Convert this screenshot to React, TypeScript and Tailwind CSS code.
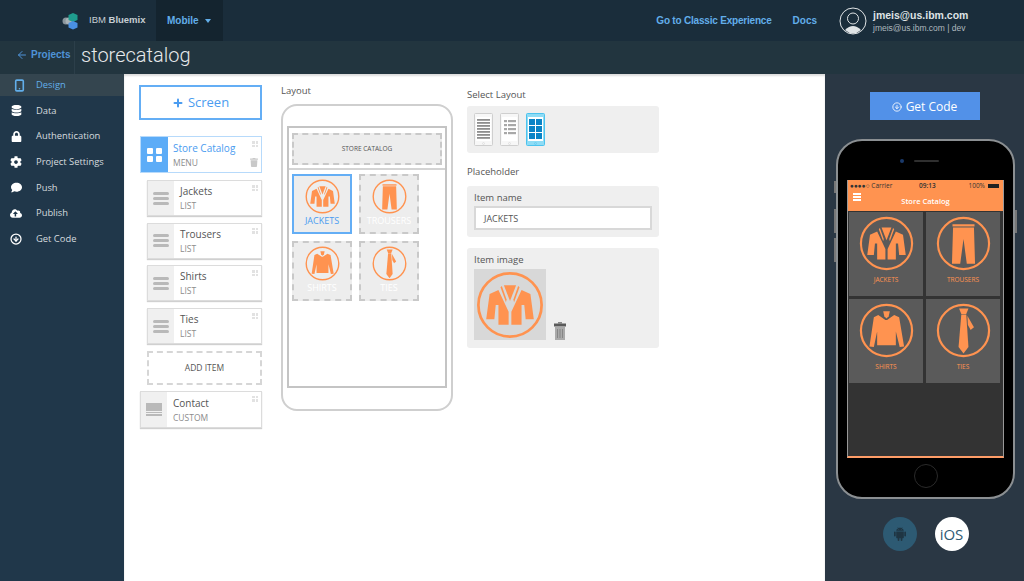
import { ArrowLeft, CircleArrowDown, Smartphone, Plus } from "lucide-react";
import { AiFillAndroid } from "react-icons/ai";
import { FaCloudUploadAlt, FaCog, FaComment, FaDatabase, FaLock, FaTrash } from "react-icons/fa";

type Garment = "jacket" | "trousers" | "shirt" | "tie";

function GarmentIcon({ kind, className }: { kind: Garment; className: string }) {
	return (
		<svg viewBox="0 0 100 100" className={className} fill="#ff9350">
			<circle cx="50" cy="50" r="46.5" fill="none" stroke="#ff9350" strokeWidth="4" />
			{kind === "jacket" && (
				<>
					<path d="M33 28 L20 34 L15 71 L27 71 L29 50 L33 50 L33 79 L48 79 L48 60 Z" />
					<path d="M67 28 L80 34 L85 71 L73 71 L71 50 L67 50 L67 79 L52 79 L52 60 Z" />
					<path d="M41 21 L59 21 L50 44 Z" />
					<path d="M36 24 L38 22 L45 42 L44 46 Z" />
					<path d="M64 24 L62 22 L55 42 L56 46 Z" />
				</>
			)}
			{kind === "trousers" && (
				<>
					<path d="M30 15 L70 15 L70 19 L30 19 Z" />
					<path d="M31 21 L69 21 L71 87 L56 87 L50 42 L44 87 L29 87 Z" />
				</>
			)}
			{kind === "shirt" && (
				<>
					<path d="M35 22 L27 26 L19 79 L27 80 L33 52 L33 77 L67 77 L67 52 L74 80 L82 79 L73 26 L64 22 L51 31 L48 31 Z" />
					<path d="M44 15 L56 15 L54 24 L50 28 L46 24 Z" />
				</>
			)}
			{kind === "tie" && (
				<>
					<path d="M42 10 L59 10 L55 20 L46 20 Z" />
					<path d="M46 21 L55 21 L59 80 L50 92 L41 80 Z" />
					<path d="M57 23 L69 44 L63 49 L58 40 Z" />
				</>
			)}
		</svg>
	);
}

function Grip() {
	return (
		<div className="absolute right-[3px] top-[4px] grid grid-cols-2 gap-[1px]">
			<span className="h-[2.5px] w-[2.5px] bg-[#e2e2e2]" />
			<span className="h-[2.5px] w-[2.5px] bg-[#e2e2e2]" />
			<span className="h-[2.5px] w-[2.5px] bg-[#e2e2e2]" />
			<span className="h-[2.5px] w-[2.5px] bg-[#e2e2e2]" />
		</div>
	);
}

function Lines() {
	return (
		<div className="flex w-[16px] flex-col gap-[2px]">
			<span className="h-[3px] rounded-sm bg-[#b9b9b9]" />
			<span className="h-[3px] rounded-sm bg-[#b9b9b9]" />
			<span className="h-[3px] rounded-sm bg-[#b9b9b9]" />
		</div>
	);
}

function ListCard({ name }: { name: string }) {
	return (
		<div className="relative ml-[8px] flex h-[36px] border border-[#dcdcdc] bg-white shadow-[0_1px_1px_#d0d0d0]">
			<div className="flex w-[26px] items-center justify-center bg-[#f0f0f0]">
				<Lines />
			</div>
			<div className="pl-[6px] pt-[3px]">
				<div className="text-[10px] leading-[15px] text-[#555555]">{name}</div>
				<div className="text-[8.5px] leading-[13px] text-[#8c8c8c]">LIST</div>
			</div>
			<Grip />
		</div>
	);
}

function DashTile({ kind, label, active }: { kind: Garment; label: string; active?: boolean }) {
	return (
		<div
			className={
				active
					? "flex h-[60px] w-[60px] flex-col items-center border-2 border-[#64aef5] bg-[#ededed] pt-[3px]"
					: "flex h-[60px] w-[60px] flex-col items-center border-2 border-dashed border-[#c9c9c9] bg-[#ededed] pt-[3px]"
			}
		>
			<GarmentIcon kind={kind} className="h-[35px] w-[35px]" />
			<span className={active ? "mt-[1px] text-[9px] leading-[12px] text-[#4b9cf0]" : "mt-[1px] text-[9px] leading-[12px] text-white"}>
				{label}
			</span>
		</div>
	);
}

function PhoneTile({ kind, label }: { kind: Garment; label: string }) {
	return (
		<div className="flex h-[84px] w-[74px] flex-col items-center bg-[#5a5a5a] pt-[4px]">
			<GarmentIcon kind={kind} className="h-[55px] w-[55px]" />
			<span className="mt-[4px] text-[6.5px] leading-[9px] text-[#ff9350]">{label}</span>
		</div>
	);
}

function LayoutThumb({ variant }: { variant: "list" | "rows" | "grid" }) {
	const edge = variant === "grid" ? "#4cc3ee" : "#cfcfcf";
	return (
		<svg viewBox="0 0 19 33" className="h-[33px] w-[19px]">
			<rect x="0.5" y="0.5" width="18" height="32" rx="1" fill={variant === "grid" ? "#8fdcf5" : "#f7f7f7"} stroke={edge} />
			<rect x="2" y="4" width="15" height="24" fill="#ffffff" />
			<circle cx="9.5" cy="30.5" r="1" fill="none" stroke={edge} strokeWidth="0.5" />
			{variant === "list" &&
				[6, 9, 12, 15, 18, 21, 24].map((y) => <rect key={y} x="3" y={y} width="13" height="1.8" fill="#8e8e8e" />)}
			{variant === "rows" &&
				[7, 11, 15, 19].map((y) => (
					<g key={y}>
						<rect x="4" y={y} width="3" height="2.2" fill="#a8a8a8" />
						<rect x="8" y={y} width="8" height="2.2" fill="#a8a8a8" />
					</g>
				))}
			{variant === "grid" &&
				[6, 13, 20].map((y) =>
					[3, 10].map((x) => <rect key={`${x}-${y}`} x={x} y={y} width="6" height="6" fill="#0a84c6" />),
				)}
		</svg>
	);
}

const navItems = [
	{ label: "Data", icon: <FaDatabase className="h-[11px] w-[11px]" /> },
	{ label: "Authentication", icon: <FaLock className="h-[11px] w-[11px]" /> },
	{ label: "Project Settings", icon: <FaCog className="h-[12px] w-[12px]" /> },
	{ label: "Push", icon: <FaComment className="h-[11px] w-[11px]" /> },
	{ label: "Publish", icon: <FaCloudUploadAlt className="h-[13px] w-[13px]" /> },
	{ label: "Get Code", icon: <CircleArrowDown className="h-[12px] w-[12px]" strokeWidth={2.5} /> },
];

export default function App() {
	return (
		<div className="flex h-[581px] w-[1024px] flex-col overflow-hidden bg-white font-['Open_Sans',sans-serif]">
			<header className="flex h-[41px] shrink-0 items-center bg-[#1a2d3b] pl-[62px] font-['Liberation_Sans',sans-serif]">
				<svg viewBox="0 0 17 18" className="h-[18px] w-[17px]">
					<circle cx="4" cy="9" r="3.5" fill="#8a959c" />
					<circle cx="7" cy="9" r="3.5" fill="#a9b2b7" />
					<path d="M11 1 L15.5 3 L15.5 8 L11 10 L6.5 8 L6.5 3 Z" fill="#1f9c8e" />
					<path d="M11 9 L15.5 11 L15.5 15.5 L11 17.5 L6.5 15.5 L6.5 11 Z" fill="#4a90e2" />
				</svg>
				<div className="ml-[10px] w-[57px] whitespace-nowrap text-[9.5px] text-[#c6ced3]">
					IBM <span className="font-bold">Bluemix</span>
				</div>
				<div className="ml-[10px] flex h-full w-[67px] items-center bg-[#14242f] pl-[11px] text-[10px] font-bold text-[#62aeea]">
					Mobile
					<span className="ml-[6px] h-0 w-0 border-x-[3px] border-t-[4px] border-x-transparent border-t-[#62aeea]" />
				</div>
				<div className="ml-auto text-[10px] font-bold tracking-[-0.2px] text-[#62aeea]">Go to Classic Experience</div>
				<div className="ml-[21px] text-[10px] font-bold text-[#62aeea]">Docs</div>
				<svg viewBox="0 0 28 28" className="ml-[22px] h-[28px] w-[28px]">
					<circle cx="14" cy="14" r="13" fill="none" stroke="#dfe3e5" strokeWidth="1" />
					<circle cx="14" cy="11.5" r="5.5" fill="none" stroke="#dfe3e5" strokeWidth="1" />
					<path d="M6 23 Q14 15 22 23 Q14 30 6 23 Z" fill="#dfe3e5" />
				</svg>
				<div className="ml-[6px] w-[151px] shrink-0 whitespace-nowrap">
					<div className="text-[10.5px] font-bold leading-[14px] text-[#dfe3e5]">jmeis@us.ibm.com</div>
					<div className="mt-[1px] text-[8.5px] leading-[11px] text-[#aeb8be]">jmeis@us.ibm.com | dev</div>
				</div>
			</header>

			<div className="flex h-[33px] shrink-0 items-center bg-[#22353f]">
				<div className="flex h-full w-[75px] items-center border-r border-[#2c3f4a] pb-[6px] pl-[16px] font-['Liberation_Sans',sans-serif] text-[10px] font-bold text-[#4f93d8]">
					<ArrowLeft className="mr-[3px] h-[12px] w-[12px]" />
					Projects
				</div>
				<div className="ml-[6px] pb-[6px] font-['Roboto',sans-serif] text-[20px] font-light text-[#e6e9eb]">storecatalog</div>
			</div>

			<div className="flex min-h-0 flex-1">
				<nav className="w-[124px] shrink-0 bg-[#20374a] text-[9.4px] text-[#d5dbdf]">
					<div className="flex h-[22px] items-center bg-[#34454f] pl-[13px] text-[#62aeea]">
						<Smartphone className="h-[15px] w-[13px]" strokeWidth={3} />
						<span className="ml-[10px]">Design</span>
					</div>
					<div className="flex flex-col pt-[2px]">
						{navItems.map((item) => (
							<div key={item.label} className="flex h-[25.6px] items-center text-white">
								<span className="flex w-[36px] justify-center">
									<span className="-ml-[4px] flex w-[12px] justify-center">{item.icon}</span>
								</span>
								<span className="text-[#d5dbdf]">{item.label}</span>
							</div>
						))}
					</div>
				</nav>

				<main className="flex flex-1 items-start pl-[15px] pt-[11px] shadow-[inset_0_2px_2px_#dddddd]">
					<div className="flex w-[123px] shrink-0 flex-col">
						<div className="flex h-[35px] items-center justify-center border-2 border-[#64aef5] text-[13px] text-[#4b9cf0]">
							<Plus className="mr-[4px] h-[12px] w-[12px]" strokeWidth={4} />
							Screen
						</div>
						<div className="relative ml-[1px] mt-[16px] flex h-[37px] border border-[#b7dafb] bg-white">
							<div className="grid w-[27px] grid-cols-2 content-center justify-center gap-[2px] bg-[#5cacf7] px-[6px]">
								<span className="h-[6px] w-[6px] rounded-[1px] bg-white" />
								<span className="h-[6px] w-[6px] rounded-[1px] bg-white" />
								<span className="h-[6px] w-[6px] rounded-[1px] bg-white" />
								<span className="h-[6px] w-[6px] rounded-[1px] bg-white" />
							</div>
							<div className="pl-[5px] pt-[4px]">
								<div className="text-[10px] leading-[15px] text-[#4b9cf0]">Store Catalog</div>
								<div className="text-[8.5px] leading-[13px] text-[#8c8c8c]">MENU</div>
							</div>
							<Grip />
							<FaTrash className="absolute bottom-[5px] right-[3px] h-[9px] w-[8px] text-[#c9c9c9]" />
						</div>
						<div className="mt-[7px] flex flex-col gap-[6.7px]">
							<ListCard name="Jackets" />
							<ListCard name="Trousers" />
							<ListCard name="Shirts" />
							<ListCard name="Ties" />
							<div className="ml-[8px] flex h-[34px] items-center justify-center border-2 border-dashed border-[#d6d6d6] pt-[2px] text-[8.5px] text-[#555555]">
								ADD ITEM
							</div>
						</div>
						<div className="relative ml-[1px] mt-[6px] flex h-[37px] border border-[#dcdcdc] bg-white shadow-[0_1px_1px_#d0d0d0]">
							<div className="flex w-[26px] items-center justify-center bg-[#f0f0f0]">
								<div className="flex w-[16px] flex-col gap-[1px]">
									<span className="h-[8px] bg-[#b9b9b9]" />
									<span className="h-[1.5px] bg-[#b9b9b9]" />
									<span className="h-[1.5px] bg-[#b9b9b9]" />
								</div>
							</div>
							<div className="pl-[6px] pt-[4px]">
								<div className="text-[10px] leading-[15px] text-[#555555]">Contact</div>
								<div className="text-[8.5px] leading-[13px] text-[#8c8c8c]">CUSTOM</div>
							</div>
							<Grip />
						</div>
					</div>

					<div className="ml-[19px] w-[172px] shrink-0">
						<div className="text-[9.5px] leading-[12px] text-[#555555]">Layout</div>
						<div className="mt-[7px] h-[307px] rounded-[16px] border-2 border-[#cfcfcf] px-[4px] pt-[20px]">
							<div className="h-[262px] border-2 border-[#c4c4c4] px-[3px] pt-[5px]">
								<div className="flex h-[32px] items-center justify-center border-2 border-dashed border-[#c9c9c9] bg-[#ededed] text-[6.5px] text-[#555555]">
									STORE CATALOG
								</div>
								<div className="-mx-[3px] mt-[3px] border-t-2 border-[#d4d4d4] px-[3px] pt-[4px]">
									<div className="grid w-[127px] grid-cols-2 gap-[7px]">
										<DashTile kind="jacket" label="JACKETS" active />
										<DashTile kind="trousers" label="TROUSERS" />
										<DashTile kind="shirt" label="SHIRTS" />
										<DashTile kind="tie" label="TIES" />
									</div>
								</div>
							</div>
						</div>
					</div>

					<div className="ml-[14px] w-[192px] shrink-0">
						<div className="mt-[4px] text-[9.5px] leading-[12px] text-[#555555]">Select Layout</div>
						<div className="mt-[5px] flex h-[47px] items-center gap-[7px] rounded-[3px] bg-[#efefef] px-[7px]">
							<LayoutThumb variant="list" />
							<LayoutThumb variant="rows" />
							<LayoutThumb variant="grid" />
						</div>
						<div className="mt-[13px] text-[9.5px] leading-[12px] text-[#555555]">Placeholder</div>
						<div className="mt-[8px] h-[51px] rounded-[3px] bg-[#efefef] px-[7px] pt-[6px]">
							<div className="text-[9.5px] leading-[12px] text-[#555555]">Item name</div>
							<div className="mt-[2px] flex h-[24px] items-center border-2 border-[#d8d8d8] bg-white pl-[8px] pt-[1px] text-[9px] text-[#555555]">
								JACKETS
							</div>
						</div>
						<div className="mt-[11px] h-[100px] rounded-[3px] bg-[#efefef] px-[7px] pt-[6px]">
							<div className="text-[9.5px] leading-[12px] text-[#555555]">Item image</div>
							<div className="mt-[3px] flex items-end">
								<div className="flex h-[71px] w-[72px] items-center justify-center bg-[#d8d8d8]">
									<GarmentIcon kind="jacket" className="h-[68px] w-[68px]" />
								</div>
								<svg viewBox="0 0 12 18" className="ml-[8px] h-[18px] w-[12px]">
									<rect x="4" y="0" width="4" height="1.5" fill="#888888" />
									<rect x="0" y="1.5" width="12" height="3" fill="#5a5a5a" />
									<rect x="1" y="5" width="10" height="13" fill="#aaaaaa" />
									<path d="M3.5 7 V16 M6 7 V16 M8.5 7 V16" stroke="#777777" strokeWidth="0.7" />
								</svg>
							</div>
						</div>
					</div>
				</main>

				<aside className="flex w-[199px] shrink-0 flex-col items-center bg-[#2a3744]">
					<div className="mt-[18px] flex h-[28px] w-[110px] items-center justify-center bg-[#5291e8] pt-[1px] text-[12px] text-white">
						<CircleArrowDown className="mr-[4px] h-[10px] w-[10px]" />
						Get Code
					</div>
					<div className="relative ml-[2px] mt-[19px] h-[360px] w-[179px] rounded-[26px] border-2 border-[#8b8f92] bg-black">
						<span className="absolute -left-[4px] top-[40px] h-[12px] w-[2px] bg-[#777777]" />
						<span className="absolute -left-[4px] top-[68px] h-[24px] w-[2px] bg-[#777777]" />
						<span className="absolute -left-[4px] top-[97px] h-[24px] w-[2px] bg-[#777777]" />
						<span className="absolute -right-[4px] top-[69px] h-[23px] w-[2px] bg-[#777777]" />
						<div className="h-[39px]">
							<span className="absolute left-[62px] top-[18px] h-[4px] w-[4px] rounded-full bg-[#1b3a6b]" />
							<span className="absolute left-[76px] top-[19px] h-[2px] w-[25px] rounded-full bg-[#2f2f2f]" />
						</div>
						<div className="mx-[9px] flex h-[278px] flex-col border-x border-b-2 border-x-[#999999] border-b-[#ff9d68] bg-[#333333]">
							<div className="h-[31px] shrink-0 bg-[#ff9350]">
								<div className="relative flex h-[12px] items-center justify-between px-[2px] text-[6.5px] leading-none text-[#333333]">
									<span>●●●●○ Carrier</span>
									<span className="absolute left-[71px] font-semibold">09:13</span>
									<span className="flex items-center gap-[3px] pr-[2px]">
										100%
										<span className="h-[4px] w-[11px] bg-[#222222]" />
									</span>
								</div>
								<div className="relative flex h-[19px] items-center justify-center pt-[1px] text-[7.5px] font-semibold text-white">
									<span className="absolute left-[5px] top-[1px] flex w-[8px] flex-col gap-[1.5px]">
										<span className="h-[1.5px] bg-white" />
										<span className="h-[1.5px] bg-white" />
										<span className="h-[1.5px] bg-white" />
									</span>
									Store Catalog
								</div>
							</div>
							<div className="grid grid-cols-[74px_74px] gap-[3px] pl-[1px] pt-[1px]">
								<PhoneTile kind="jacket" label="JACKETS" />
								<PhoneTile kind="trousers" label="TROUSERS" />
								<PhoneTile kind="shirt" label="SHIRTS" />
								<PhoneTile kind="tie" label="TIES" />
							</div>
						</div>
						<span className="absolute left-[76px] top-[323px] h-[24px] w-[24px] rounded-full border border-[#2a2a2a]" />
					</div>
					<div className="ml-[2px] mt-[18px] flex gap-[18px]">
						<div className="flex h-[34px] w-[34px] items-center justify-center rounded-full bg-[#2d5a73]">
							<AiFillAndroid className="h-[16px] w-[16px] text-[#1f3543]" />
						</div>
						<div className="flex h-[34px] w-[34px] items-center justify-center rounded-full bg-white text-[15px] text-[#2d5a73]">
							iOS
						</div>
					</div>
				</aside>
			</div>
		</div>
	);
}
